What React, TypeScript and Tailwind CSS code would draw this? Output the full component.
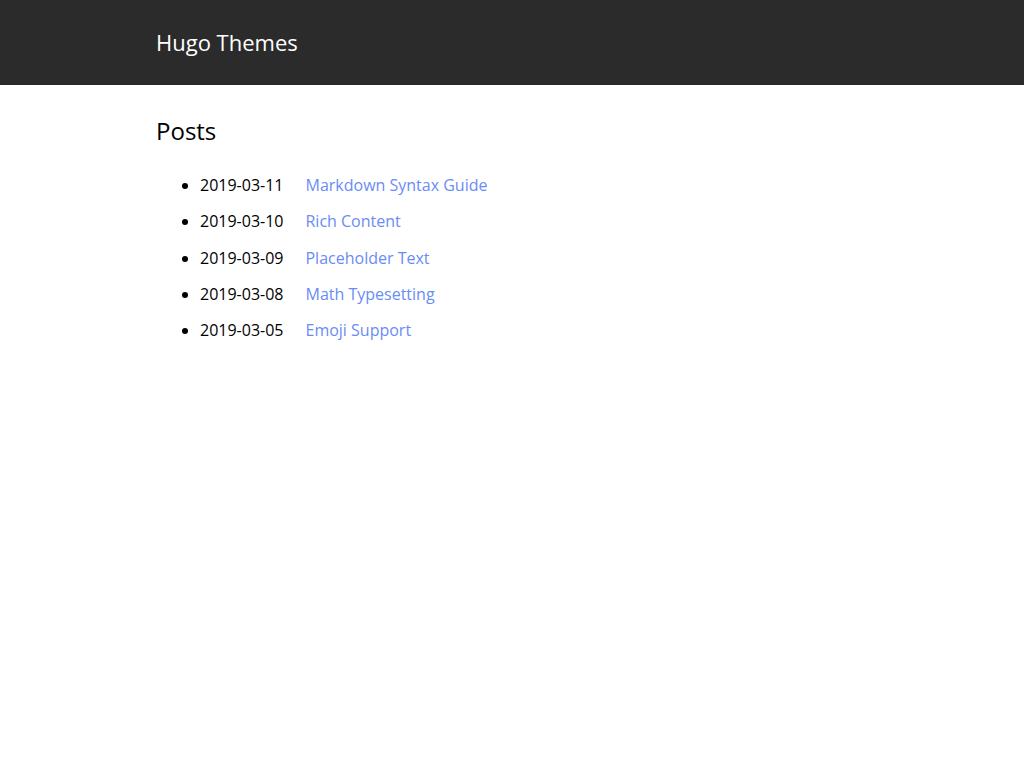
import React from "react";

const posts = [
  { date: "2019-03-11", title: "Markdown Syntax Guide" },
  { date: "2019-03-10", title: "Rich Content" },
  { date: "2019-03-09", title: "Placeholder Text" },
  { date: "2019-03-08", title: "Math Typesetting" },
  { date: "2019-03-05", title: "Emoji Support" },
];

export default function App() {
  return (
    <div className="min-h-screen bg-white font-['Open_Sans',sans-serif] text-black">
      {/* Header */}
      <header className="h-[85px] bg-[#2b2b2b]">
        <div className="mx-auto flex h-full w-[712px] items-center">
          <a href="#" className="text-[22px] text-white">
            Hugo Themes
          </a>
        </div>
      </header>

      {/* Main */}
      <main className="mx-auto w-[712px] pt-[28px]">
        <h1 className="text-[24px] leading-[36px]">Posts</h1>
        <ul className="mt-[18px] list-disc pl-[44px]">
          {posts.map((p) => (
            <li key={p.date} className="h-[36.25px] text-[16px] leading-[36px]">
              <span>{p.date}</span>
              <a href="#" className="ml-[22px] text-[#6a8cf6]">
                {p.title}
              </a>
            </li>
          ))}
        </ul>
      </main>
    </div>
  );
}
